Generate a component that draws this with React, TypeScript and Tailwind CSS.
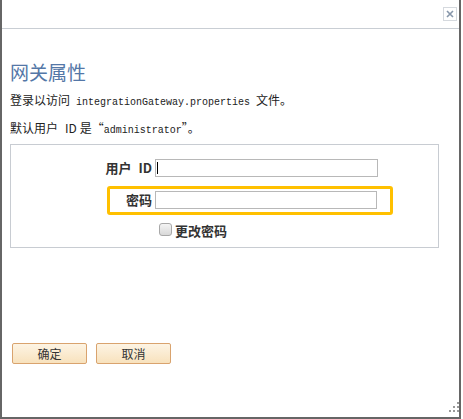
import React from "react";

function Sp({ w = 6 }: { w?: number }) {
  return <span className="inline-block w-[6px]" style={{ width: w }} />;
}

export default function App() {
  return (
    <div className="w-[463px] h-[419px] bg-white relative font-['Noto_Sans_CJK_SC','Noto_Sans',sans-serif] text-[#222]">
      <div className="w-[461px] h-[419px] border-l-2 border-r-2 border-b-2 border-[#666] flex flex-col relative">
        <div className="h-[29px] border-b border-[#c9ced4] flex justify-end items-start pt-[7px] pr-[2px]">
          <div className="w-[14px] h-[14px] border border-[#d5d9de] flex items-center justify-center">
            <svg width="8" height="8" viewBox="0 0 8 8">
              <path d="M1 1L7 7M7 1L1 7" stroke="#8696aa" strokeWidth="1.6" />
            </svg>
          </div>
        </div>
        <div className="pl-[8px] flex flex-col">
          <div className="mt-[31px] h-[24px] leading-[24px] text-[19px] text-[#5477a7]">网关属性</div>
          <div className="mt-[8px] h-[16px] leading-[16px] text-[12px] whitespace-nowrap">
            登录以访问<Sp /><span className="font-['Liberation_Mono',monospace] text-[10px]">integrationGateway.properties</span><Sp />文件。
          </div>
          <div className="mt-[12px] h-[16px] leading-[16px] text-[12px] whitespace-nowrap">
            默认用户<Sp w={7} />ID<Sp w={3} />是“<span className="font-['Liberation_Mono',monospace] text-[10px]">administrator</span>”。
          </div>
          <div className="mt-[8px] w-[429px] h-[104px] border border-[#c8ccd2] relative pt-[14px] flex flex-col">
            <div className="flex items-center h-[18px]">
              <div className="w-[141px] text-right text-[13px] font-bold text-[#333] leading-[18px]">用户<Sp w={7} />ID</div>
              <div className="ml-[3px] w-[223px] h-[18px] border border-[#b8b8b8] relative">
                <div className="absolute left-[1px] top-[2px] w-[1px] h-[12px] bg-black" />
              </div>
            </div>
            <div className="flex items-center h-[18px] mt-[14px]">
              <div className="w-[141px] text-right text-[13px] font-bold text-[#333] leading-[18px]">密码</div>
              <div className="ml-[3px] w-[222px] h-[18px] border border-[#b8b8b8]" />
            </div>
            <div className="flex items-center mt-[13px] pl-[148px] h-[14px]">
              <div className="w-[13px] h-[13px] rounded-[3px] border border-[#a8a8a8] bg-gradient-to-b from-[#f4f4f4] to-[#d8d8d8]" />
              <div className="ml-[3px] text-[13px] font-bold text-[#333] leading-[14px] mt-[4px]">更改密码</div>
            </div>
            <div className="absolute left-[96px] top-[41px] w-[286px] h-[29px] border-[3px] border-[#ffc000] rounded-[3px]" />
          </div>
          <div className="mt-[95px] flex gap-[9px] pl-[2px]">
            <div className="w-[75px] h-[21px] border border-[#d9a36e] rounded-[2px] bg-gradient-to-b from-[#fdf4e4] to-[#f8e2bd] flex items-center justify-center text-[12px] text-[#333]">确定</div>
            <div className="w-[75px] h-[21px] border border-[#d9a36e] rounded-[2px] bg-gradient-to-b from-[#fdf4e4] to-[#f8e2bd] flex items-center justify-center text-[12px] text-[#333]">取消</div>
          </div>
        </div>
        <svg className="absolute left-[447px] top-[402px]" width="11" height="11" viewBox="0 0 11 11">
          <rect x="8" y="0" width="2" height="2" fill="#9a9a9a" />
          <rect x="4" y="4" width="2" height="2" fill="#9a9a9a" />
          <rect x="8" y="4" width="2" height="2" fill="#9a9a9a" />
          <rect x="0" y="8" width="2" height="2" fill="#9a9a9a" />
          <rect x="4" y="8" width="2" height="2" fill="#9a9a9a" />
          <rect x="8" y="8" width="2" height="2" fill="#9a9a9a" />
        </svg>
      </div>
    </div>
  );
}
